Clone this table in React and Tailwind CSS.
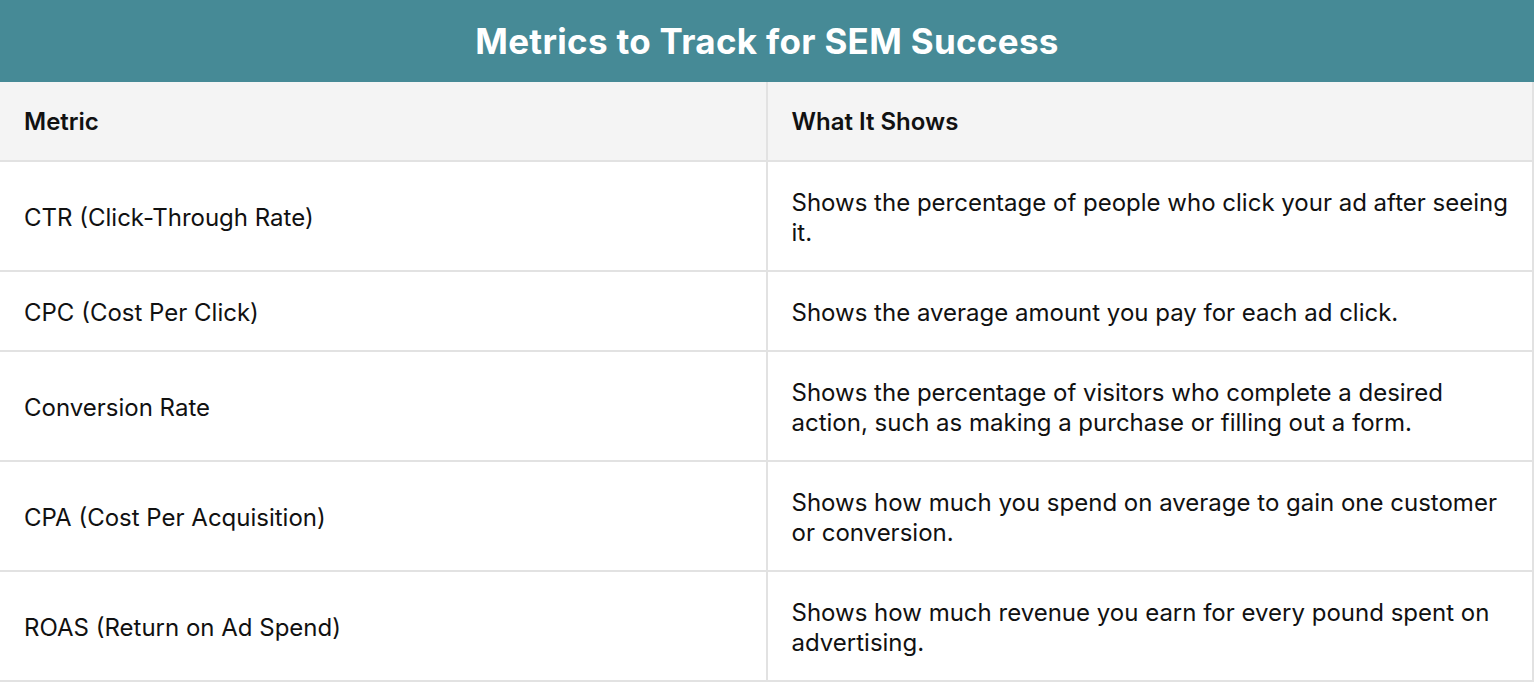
import React from 'react'

const rows = [
  ['CTR (Click-Through Rate)', 'Shows the percentage of people who click your ad after seeing it.'],
  ['CPC (Cost Per Click)', 'Shows the average amount you pay for each ad click.'],
  ['Conversion Rate', 'Shows the percentage of visitors who complete a desired action, such as making a purchase or filling out a form.'],
  ['CPA (Cost Per Acquisition)', 'Shows how much you spend on average to gain one customer or conversion.'],
  ['ROAS (Return on Ad Spend)', 'Shows how much revenue you earn for every pound spent on advertising.'],
]

const App = () => {
  return (
    <div className="w-[1534px] bg-white font-['Inter',sans-serif] text-[#111]">
      <div className="flex h-[82px] items-center justify-center bg-[#468a96]">
        <h1 className="text-[35px] font-bold tracking-[0.3px] text-white">Metrics to Track for SEM Success</h1>
      </div>
      <table className="w-full table-fixed border-collapse">
        <thead>
          <tr className="bg-[#f4f4f4]">
            <th className="h-[79px] w-1/2 border-r-2 border-b-2 border-[#e2e2e2] px-6 pt-[2px] text-left text-[24px] font-semibold">Metric</th>
            <th className="w-1/2 border-r-2 border-b-2 border-[#e2e2e2] px-6 pt-[2px] text-left text-[24px] font-semibold">What It Shows</th>
          </tr>
        </thead>
        <tbody>
          {rows.map(([metric, desc]) => (
            <tr key={metric}>
              <td className="border-r-2 border-b-2 border-[#e2e2e2] px-6 pt-[26px] pb-[22px] align-middle text-[24px] leading-[30px]">{metric}</td>
              <td className="border-r-2 border-b-2 border-[#e2e2e2] px-6 pt-[26px] pb-[22px] pr-5 align-middle text-[24px] leading-[30px]">{desc}</td>
            </tr>
          ))}
        </tbody>
      </table>
    </div>
  )
}

export default App
